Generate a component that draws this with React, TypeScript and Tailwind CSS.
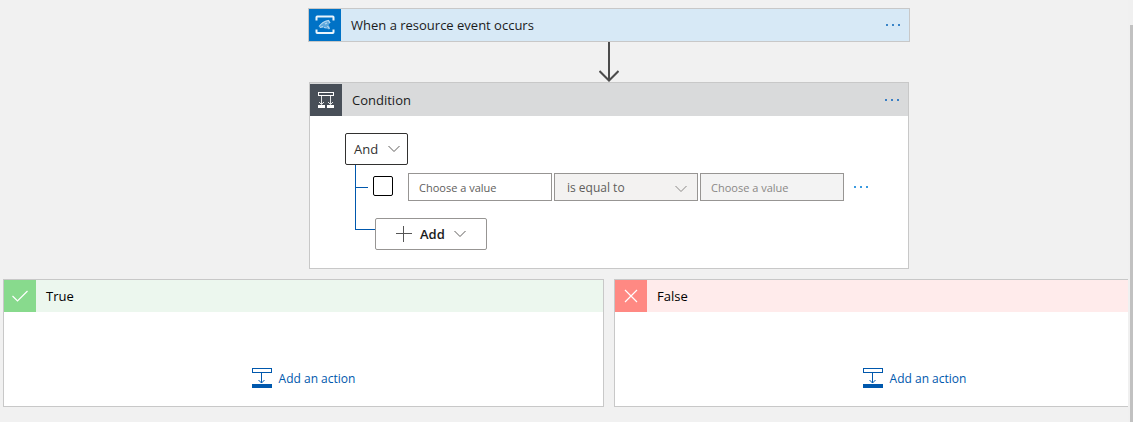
import type { ReactNode } from "react";

function MoreButton({ label, className }: { label: string; className: string }) {
  return (
    <button type="button" aria-label={label} className={`flex h-8 w-8 items-center justify-center ${className}`}>
      <svg width="14" height="2" viewBox="0 0 14 2" fill="currentColor" shapeRendering="crispEdges">
        <rect width="2" height="2" />
        <rect x="6" width="2" height="2" />
        <rect x="12" width="2" height="2" />
      </svg>
    </button>
  );
}

function Chevron({ className }: { className: string }) {
  return (
    <svg width="12" height="8" viewBox="0 0 12 8" fill="none" stroke="currentColor" strokeWidth="1" className={className}>
      <path d="M0.5 1 L6 6.5 L11.5 1" />
    </svg>
  );
}

function EventGridIcon() {
  return (
    <svg width="20" height="20" viewBox="0 0 20 20" fill="none" aria-hidden="true">
      <path d="M1.5 5.5V2.2Q1.5 1.5 2.2 1.5H17.8Q18.5 1.5 18.5 2.2V5.5M1.5 14.5V17.3Q1.5 18 2.2 18H17.8Q18.5 18 18.5 17.3V14.5" stroke="#eaf4fb" strokeWidth="2" />
      <path d="M4 11.5Q7 6.5 13 5L15.5 7.5L13.5 10L15 12.5L13.5 14.5L10 12.5L5 13Z" fill="#5fa8dd" />
      <path d="M4 11.5Q7.5 6.5 13.5 5.5L15 8M5 12.5L8 11.5M10 9L12 8M12.5 11L14.5 14M9 12.5L11.5 13" stroke="#b5d8f1" strokeWidth="1.2" />
    </svg>
  );
}

function ConditionIcon() {
  return (
    <svg width="16" height="16" viewBox="0 0 16 16" fill="none" stroke="#fff" strokeWidth="1" aria-hidden="true">
      <rect x="0.5" y="0.5" width="15" height="3" />
      <path d="M3.5 4V12M12.5 4V12M1 10L3.5 12.5L6 10M10 10L12.5 12.5L15 10" strokeOpacity="0.85" />
      <path d="M0 13H7V16H0ZM9 13H16V16H9Z" fill="#fff" stroke="none" />
    </svg>
  );
}

function InsertIcon() {
  return (
    <svg width="20" height="20" viewBox="0 0 20 20" fill="none" stroke="#0058ad" strokeWidth="1" aria-hidden="true">
      <rect x="0.5" y="0.5" width="19" height="4" />
      <path d="M9.5 5V15M6.5 12L9.5 15L12.5 12" />
      <path d="M0 16H20V20H0Z" fill="#0058ad" stroke="none" />
    </svg>
  );
}

function Branch({ title, tile, header, icon }: { title: string; tile: string; header: string; icon: ReactNode }) {
  return (
    <section className="flex-1 border border-[#c8c8c8] bg-white">
      <header className={`flex h-8 items-center ${header}`}>
        <span className={`flex h-8 w-8 items-center justify-center ${tile}`}>{icon}</span>
        <h2 className="pt-[2px] pl-[10px] text-[13px] text-black">{title}</h2>
      </header>
      <div className="flex justify-center pt-14 pb-[18px]">
        <button type="button" className="flex h-5 items-center gap-[7px] text-[12px] text-[#0058ad]">
          <InsertIcon />
          <span className="pt-[2px]">Add an action</span>
        </button>
      </div>
    </section>
  );
}

export default function App() {
  return (
    <div className="flex h-screen overflow-hidden bg-[#f1f1f1] font-['Open_Sans','Noto_Sans',sans-serif]">
      <main className="min-w-0 flex-1 overflow-hidden pt-2 pl-[3px]">
        <div className="flex min-w-[1212px] flex-col items-center">
          <section className="flex w-[602px] items-center border border-[#c8c8c8] bg-[#d7e9f6]">
            <span className="flex h-8 w-8 items-center justify-center bg-[#0072c6]">
              <EventGridIcon />
            </span>
            <h1 className="flex-1 pt-[2px] pl-[10px] text-[13px] text-[#1b1b1b]">When a resource event occurs</h1>
            <MoreButton label="Trigger options" className="text-[#3a85c8]" />
          </section>

          <svg width="20" height="40" viewBox="0 0 20 40" fill="none" stroke="#4b4b4b" strokeWidth="2" aria-hidden="true">
            <path d="M10 0V38M0.5 29L10 38.5L19.5 29" />
          </svg>

          <section className="w-[600px] border border-[#c8c8c8] bg-white">
            <header className="flex items-center bg-[#d9dadb] pt-px">
              <span className="flex h-8 w-8 items-center justify-center bg-[#484f58]">
                <ConditionIcon />
              </span>
              <h1 className="flex-1 pt-[2px] pl-[10px] text-[13px] text-[#1b1b1b]">Condition</h1>
              <MoreButton label="Condition options" className="text-[#3a7fc4]" />
            </header>

            <div className="pt-[17px] pb-[18px] pl-[35px]">
              <button
                type="button"
                className="flex h-8 w-[63px] items-center justify-between rounded-[2px] border border-[#323130] pr-[7px] pl-2 text-[13px] text-[#323130]"
              >
                <span className="pt-[2px]">And</span>
                <Chevron className="text-[#605e5c]" />
              </button>

              <div className="ml-[10px]">
                <div className="flex items-center border-l border-[#0058ad] pt-2">
                  <span className="h-px w-3 bg-[#0058ad]" />
                  <input
                    type="checkbox"
                    aria-label="Select row"
                    className="mb-[2px] ml-[5px] size-5 appearance-none rounded-[2px] border border-black bg-white"
                  />
                  <input
                    type="text"
                    aria-label="Left value"
                    placeholder="Choose a value"
                    className="ml-[15px] h-7 w-36 border border-[#979593] bg-white px-[10px] text-[11px] placeholder:text-[#605e5c]"
                  />
                  <div className="ml-[2px] grid items-center">
                    <select
                      aria-label="Operator"
                      className="col-start-1 row-start-1 h-7 w-36 appearance-none border border-[#979593] bg-[#f3f2f1] px-3 pt-[2px] text-[12px] text-[#605e5c]"
                    >
                      <option>is equal to</option>
                    </select>
                    <Chevron className="pointer-events-none col-start-1 row-start-1 mt-[3px] mr-[11px] justify-self-end text-[#8a8886]" />
                  </div>
                  <input
                    type="text"
                    aria-label="Right value"
                    placeholder="Choose a value"
                    className="ml-[2px] h-7 w-36 border border-[#979593] bg-[#f3f3f3] px-[10px] text-[11px] placeholder:text-[#8a8886]"
                  />
                  <MoreButton label="Row options" className="-my-1 ml-px text-[#3a9ae0]" />
                </div>
                <div className="flex items-start">
                  <span className="h-[29px] w-5 border-b border-l border-[#0058ad]" />
                  <button
                    type="button"
                    className="mt-[17px] flex h-8 w-28 items-center rounded-[2px] border border-[#979593] pl-5 text-[13px] font-semibold text-[#1b1b1b]"
                  >
                    <svg width="16" height="16" viewBox="0 0 16 16" stroke="#555" strokeWidth="1" aria-hidden="true">
                      <path d="M0 7.5H16M7.5 0V16" />
                    </svg>
                    <span className="w-[42px] pt-px pl-2 text-left">Add</span>
                    <Chevron className="text-[#605e5c]" />
                  </button>
                </div>
              </div>
            </div>
          </section>

          <div className="mt-[10px] flex w-full gap-[10px]">
            <Branch
              title="True"
              tile="bg-[#88da8d]"
              header="bg-[#ecf7ee]"
              icon={
                <svg width="16" height="12" viewBox="0 0 16 12" fill="none" stroke="#fff" strokeWidth="1.2">
                  <path d="M0.5 6L5.5 11L15.5 1" />
                </svg>
              }
            />
            <Branch
              title="False"
              tile="bg-[#ff8983]"
              header="bg-[#ffebeb]"
              icon={
                <svg width="14" height="14" viewBox="0 0 14 14" fill="none" stroke="#fff" strokeWidth="1.2">
                  <path d="M1 1L13 13M13 1L1 13" />
                </svg>
              }
            />
          </div>
        </div>
      </main>
      <div className="w-[5px] bg-[#f0f0f0] pt-[25px] pl-[2px]">
        <div className="h-full bg-[#c1c1c1]" />
      </div>
    </div>
  );
}
